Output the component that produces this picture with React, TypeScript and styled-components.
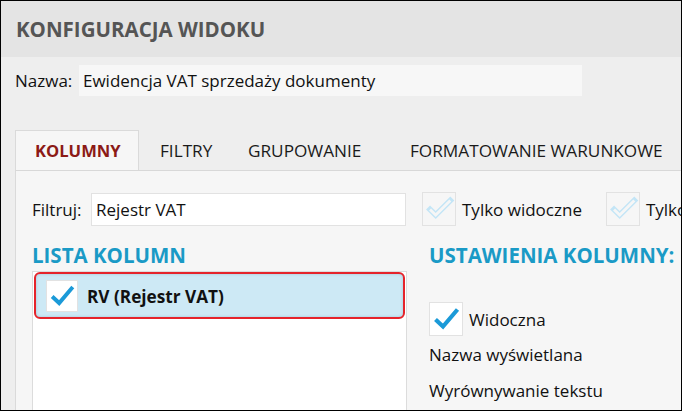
import React from "react";
import styled, { createGlobalStyle } from "styled-components";

const Global = createGlobalStyle`
  html, body { margin: 0; padding: 0; background: #ffffff; }
  body { font-family: "Open Sans", "Noto Sans", "Liberation Sans", sans-serif; color: #111; }
  * { box-sizing: border-box; }
`;

const Frame = styled.div`
  width: 682px;
  height: 411px;
  border: 1px solid #000;
  background: #eeeeee;
  overflow: hidden;
  display: flex;
  flex-direction: column;
`;

const TitleBar = styled.header`
  height: 56px;
  flex: none;
  background: #e4e4e4;
  display: flex;
  align-items: center;
  padding-left: 15px;
  font-size: 20.5px;
  font-weight: 700;
  color: #555555;
  white-space: nowrap;
`;

const NameRow = styled.div`
  display: flex;
  align-items: center;
  margin-top: 8px;
  padding-left: 14px;
  height: 31px;
  flex: none;
`;

const Label = styled.span<{ $w: number }>`
  width: ${(p) => p.$w}px;
  flex: none;
  font-size: 17px;
  color: #111;
  white-space: nowrap;
`;

const NameField = styled.div`
  width: 503px;
  height: 31px;
  background: #f7f7f7;
  display: flex;
  align-items: center;
  padding-left: 4px;
  font-size: 17px;
  color: #111;
  white-space: nowrap;
`;

const TabStrip = styled.nav`
  display: flex;
  align-items: flex-end;
  margin-top: 34px;
  padding-left: 14px;
  height: 40px;
  flex: none;
`;

const Tab = styled.div<{ $active?: boolean; $w: number }>`
  width: ${(p) => p.$w}px;
  flex: none;
  height: 40px;
  display: flex;
  align-items: center;
  padding-left: ${(p) => (p.$active ? 19 : 20)}px;
  font-size: ${(p) => (p.$active ? "16.6px" : "17.2px")};
  white-space: nowrap;
  font-weight: ${(p) => (p.$active ? 700 : 400)};
  color: ${(p) => (p.$active ? "#8c1a16" : "#1a1a1a")};
  background: ${(p) => (p.$active ? "#f6f6f6" : "transparent")};
  border: 1px solid ${(p) => (p.$active ? "#dadada" : "transparent")};
  border-bottom: none;
`;

const Panel = styled.section`
  flex: 1;
  margin-left: 14px;
  border-top: 1px solid #d8d8d8;
  border-left: 1px solid #dadada;
  background: #f6f6f6;
  padding: 21px 0 0 16px;
  display: flex;
  flex-direction: column;
  min-height: 0;
`;

const FilterRow = styled.div`
  display: flex;
  align-items: center;
  height: 34px;
  flex: none;
  white-space: nowrap;
`;

const FilterInput = styled.div`
  width: 315px;
  height: 33px;
  background: #ffffff;
  border: 1px solid #e2e2e2;
  display: flex;
  align-items: center;
  padding-left: 4px;
  font-size: 17px;
  color: #111;
  flex: none;
`;

const Box = styled.div<{ $size: number; $bg: string }>`
  width: ${(p) => p.$size}px;
  height: ${(p) => p.$size}px;
  flex: none;
  background: ${(p) => p.$bg};
  border: 1px solid #e2e2e2;
  display: flex;
  align-items: center;
  justify-content: center;
`;

const OptionItem = styled.div<{ $ml: number }>`
  display: flex;
  align-items: center;
  margin-left: ${(p) => p.$ml}px;
  flex: none;
`;

const OptionText = styled.span`
  margin-left: 6px;
  font-size: 17px;
  color: #111;
`;

const Columns = styled.div`
  flex: 1;
  display: grid;
  grid-template-columns: 375px 1fr;
  column-gap: 22px;
  margin-top: 14px;
  min-height: 0;
`;

const Col = styled.div`
  display: flex;
  flex-direction: column;
  min-height: 0;
  white-space: nowrap;
`;

const Heading = styled.h2`
  margin: 0;
  height: 31px;
  font-size: 20.5px;
  font-weight: 700;
  color: #1a9ac6;
  line-height: 31px;
`;

const ListBox = styled.div`
  flex: 1;
  background: #ffffff;
  border: 1px solid #dcdcdc;
  border-bottom: none;
  padding: 0 1px 0 1px;
`;

const SelectedRow = styled.div`
  height: 47px;
  display: flex;
  align-items: center;
  padding-left: 10px;
  background: #cde9f5;
  border: 2px solid #e5242b;
  border-radius: 6px;
  box-shadow: inset 0 0 3px rgba(80, 130, 160, 0.35);
`;

const RowText = styled.span`
  margin-left: 9px;
  font-size: 17.2px;
  font-weight: 700;
  color: #111;
  padding-top: 2px;
`;

const Settings = styled.div`
  display: flex;
  flex-direction: column;
  padding-top: 31px;
`;

const SettingLine = styled.div`
  height: 36px;
  display: flex;
  align-items: center;
  font-size: 17px;
  color: #111;
`;

const CheckOn: React.FC<{ size: number }> = ({ size }) => (
  <svg width={size} height={size} viewBox="0 0 32 32">
    <polyline
      points="5.5,16.5 13,23.5 27.5,6.5"
      fill="none"
      stroke="#1b9ad8"
      strokeWidth={4.2}
      strokeLinejoin="miter"
    />
  </svg>
);

const CheckOff: React.FC = () => (
  <svg width={34} height={34} viewBox="0 0 34 34">
    <polyline
      points="7.5,17.5 13.5,23.5 29,8"
      fill="none"
      stroke="#c3e5f6"
      strokeWidth={6}
      strokeLinecap="square"
      strokeLinejoin="miter"
    />
    <polyline
      points="7.5,17.5 13.5,23.5 29,8"
      fill="none"
      stroke="#f6f6f6"
      strokeWidth={3}
      strokeLinecap="butt"
      strokeLinejoin="miter"
    />
  </svg>
);

export default function App() {
  return (
    <>
      <Global />
      <Frame>
        <TitleBar>KONFIGURACJA WIDOKU</TitleBar>
        <NameRow>
          <Label $w={64}>Nazwa:</Label>
          <NameField>Ewidencja VAT sprzedaży dokumenty</NameField>
        </NameRow>
        <TabStrip>
          <Tab $active $w={124}>KOLUMNY</Tab>
          <Tab $w={88}>FILTRY</Tab>
          <Tab $w={162}>GRUPOWANIE</Tab>
          <Tab $w={300}>FORMATOWANIE WARUNKOWE</Tab>
        </TabStrip>
        <Panel>
          <FilterRow>
            <Label $w={59}>Filtruj:</Label>
            <FilterInput>Rejestr VAT</FilterInput>
            <OptionItem $ml={16}>
              <Box $size={34} $bg="#f6f6f6">
                <CheckOff />
              </Box>
              <OptionText>Tylko widoczne</OptionText>
            </OptionItem>
            <OptionItem $ml={24}>
              <Box $size={34} $bg="#f6f6f6">
                <CheckOff />
              </Box>
              <OptionText>Tylko zaznaczone</OptionText>
            </OptionItem>
          </FilterRow>
          <Columns>
            <Col>
              <Heading>LISTA KOLUMN</Heading>
              <ListBox>
                <SelectedRow>
                  <Box $size={32} $bg="#ffffff">
                    <CheckOn size={30} />
                  </Box>
                  <RowText>RV (Rejestr VAT)</RowText>
                </SelectedRow>
              </ListBox>
            </Col>
            <Col>
              <Heading>USTAWIENIA KOLUMNY:</Heading>
              <Settings>
                <OptionItem $ml={0}>
                  <Box $size={34} $bg="#ffffff">
                    <CheckOn size={32} />
                  </Box>
                  <OptionText>Widoczna</OptionText>
                </OptionItem>
                <SettingLine>Nazwa wyświetlana</SettingLine>
                <SettingLine>Wyrównywanie tekstu</SettingLine>
              </Settings>
            </Col>
          </Columns>
        </Panel>
      </Frame>
    </>
  );
}
